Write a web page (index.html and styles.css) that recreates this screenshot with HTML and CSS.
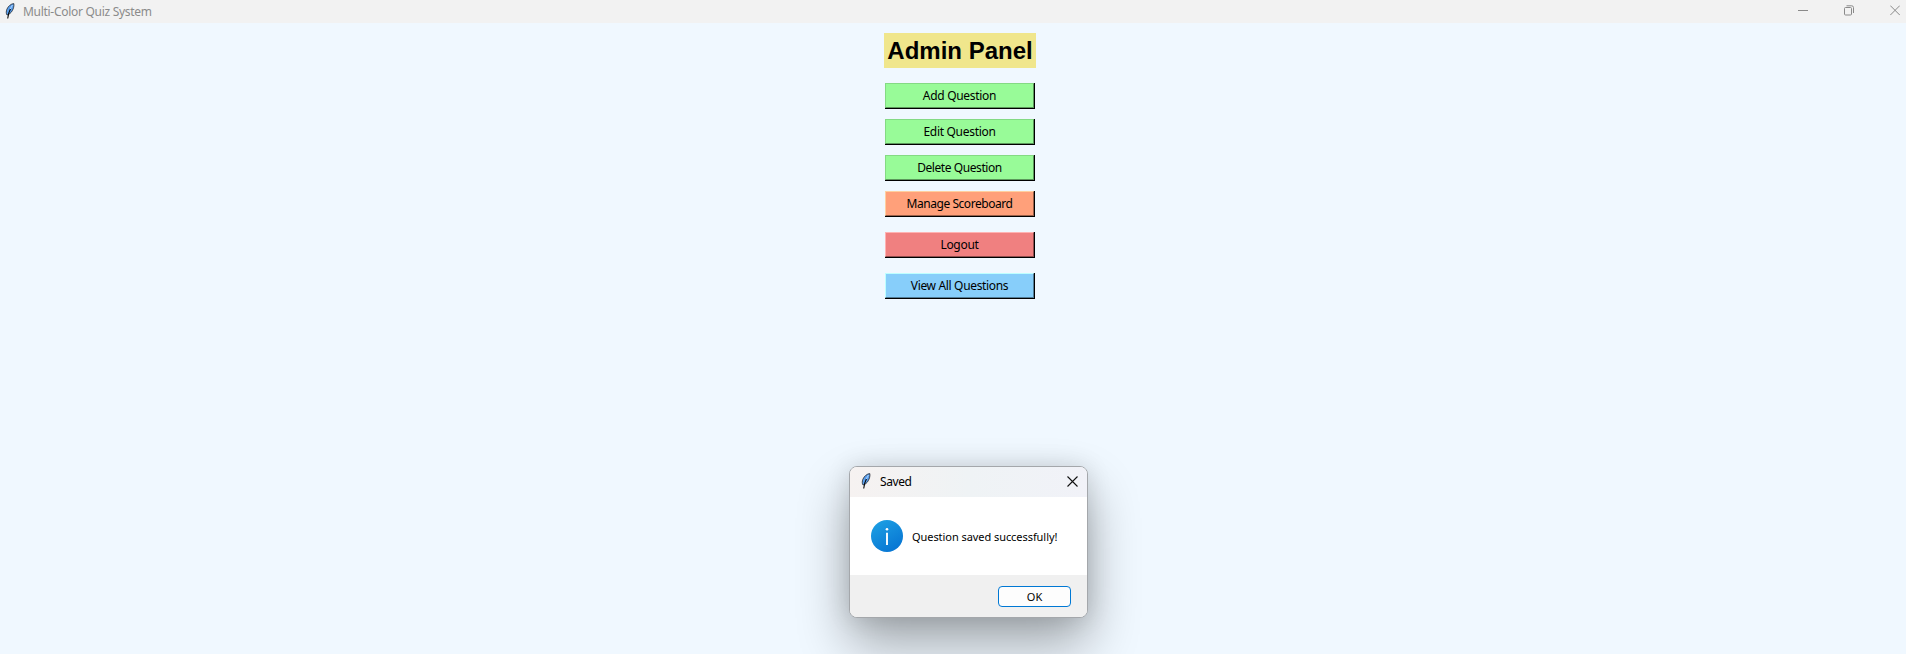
FILE: index.html
```html
<!DOCTYPE html>
<html lang="en">
<head>
<meta charset="utf-8">
<title>Multi-Color Quiz System</title>
<link rel="stylesheet" href="styles.css">
</head>
<body>
<svg width="0" height="0" class="defs" aria-hidden="true">
  <defs>
    <linearGradient id="info" x1="0.2" y1="0" x2="0.8" y2="1"><stop offset="0" stop-color="#1d9fe3"/><stop offset="1" stop-color="#0673d2"/></linearGradient>
    <symbol id="feather" viewBox="0 0 10 16">
      <path d="M8.800.6C6 .8 3.200 3.200 1.900 6.200 1 8.400 1.100 10.500 2 12c2-.5 4-2 5.200-4.200C8.600 5.400 9.200 3 8.800.6z" fill="#5a9fee" stroke="#22262c" stroke-width=".8"/>
      <path d="M5.600 5.500C4.300 8 3.100 11 2.700 15.500" fill="none" stroke="#080808" stroke-width="1.100"/>
      <path d="M7.500 2 5.200 6" stroke="#a9d0fb" stroke-width="1"/>
    </symbol>
  </defs>
</svg>
<header class="titlebar">
  <svg class="feather"><use href="#feather"/></svg>
  <span class="window-title">Multi-Color Quiz System</span>
  <div class="controls">
    <svg width="10" height="11"><path d="M0 5.500h10"/></svg>
    <svg width="10" height="11" fill="none"><rect x=".5" y="2.500" width="7" height="7.500" rx="1"/><path d="M2.500.8h5.200q1.800 0 1.800 1.800v5.400"/></svg>
    <svg width="10" height="11"><path d="M.3.600l9.500 9.500M9.800.600l-9.500 9.500"/></svg>
  </div>
</header>
<main class="panel">
  <h1>Admin Panel</h1>
  <button class="btn green add"><span>Add Question</span></button>
  <button class="btn green edit"><span>Edit Question</span></button>
  <button class="btn green delete"><span>Delete Question</span></button>
  <button class="btn salmon"><span>Manage Scoreboard</span></button>
  <button class="btn coral"><span>Logout</span></button>
  <button class="btn sky"><span>View All Questions</span></button>
</main>
<section class="dialog" role="dialog">
  <div class="dialog-title">
    <svg class="feather"><use href="#feather"/></svg>
    <span>Saved</span>
    <svg class="close" width="11" height="11"><path d="M.5.500l10 10M10.500.500l-10 10"/></svg>
  </div>
  <div class="dialog-body">
    <svg width="32" height="32"><circle cx="16" cy="16" r="16" fill="url(#info)"/><circle cx="16" cy="9.200" r="1.300" fill="#fff"/><path d="M16 12.700V25" stroke="#fff" stroke-width="1.900"/></svg>
    <span class="message">Question saved successfully!</span>
  </div>
  <div class="dialog-footer"><button class="ok">OK</button></div>
</section>
</body>
</html>
```
FILE: styles.css
```css
* { box-sizing: border-box; }
body {
  margin: 0;
  height: 654px;
  overflow: hidden;
  background: #f0f8ff;
  font: 12px/16px "Noto Sans", sans-serif;
  color: #000;
}
.defs { position: absolute; }
.titlebar {
  height: 23px;
  display: flex;
  align-items: flex-start;
  padding: 3px 6px 0 5px;
  background: #f2f2f2;
  color: #8b8b8b;
}
.feather { width: 10px; height: 16px; flex: none; }
.window-title { margin: 1px 0 0 8px; letter-spacing: -0.29px; }
.controls { margin-left: auto; padding-top: 2px; display: flex; gap: 36px; }
.controls svg { stroke: #8a8a8a; stroke-width: 1; }
.panel {
  display: flex;
  flex-direction: column;
  align-items: center;
  gap: 10px;
  padding: 10px 0 0 14px;
}
h1 {
  width: 152px;
  height: 35px;
  margin: 0 0 5px;
  background: #f0e68c;
  font: bold 24px/36px "Liberation Sans", Arial, sans-serif;
  text-align: center;
  white-space: nowrap;
}
.btn {
  width: 150px;
  height: 26px;
  padding: 0 1px 1px 0;
  border: 0;
  background: #000;
  color: #000;
  font: inherit;
  letter-spacing: -0.3px;
}
.btn span { display: block; height: 25px; line-height: 24px; border: 1px solid; }
.green span { background: #98fb98; border-color: #84da84 #5b975b #5b975b #84da84; }
.delete { letter-spacing: -0.42px; }
.salmon { letter-spacing: -0.44px; }
.salmon span { background: #ffa07a; border-color: #ffd0a0 #996049 #996049 #ffd0a0; }
.coral { margin-top: 5px; }
.coral span { background: #f08080; border-color: #ffb3b3 #904d4d #904d4d #ffb3b3; }
.sky { margin-top: 5px; letter-spacing: -0.34px; }
.sky span { background: #87cefa; border-color: #bdffff #517c96 #517c96 #bdffff; }
.dialog {
  position: absolute;
  left: 849px;
  top: 466px;
  width: 239px;
  height: 152px;
  border: 1px solid #a4a7ab;
  border-radius: 8px;
  overflow: hidden;
  background: #fff;
  box-shadow: 0 26px 52px rgba(0, 0, 0, .33), 0 0 24px rgba(0, 0, 0, .12);
}
.dialog-title {
  height: 30px;
  display: flex;
  align-items: flex-start;
  padding: 6px 9px 0 11px;
  background: linear-gradient(90deg, #f6f2f1, #eff3f5 50%, #f1f2f8);
}
.dialog-title span { margin: 1px 0 0 9px; letter-spacing: -0.4px; }
.close { margin: 3px 0 0 auto; stroke: #111; stroke-width: 1.100; }
.dialog-body { height: 78px; display: flex; align-items: flex-start; padding: 23px 0 0 21px; }
.message { margin: 9px 0 0 9px; font-size: 11px; letter-spacing: -0.06px; white-space: nowrap; }
.dialog-footer { height: 42px; display: flex; justify-content: flex-end; padding: 11px 16px 0 0; background: #f0f0f0; }
.ok {
  width: 73px;
  height: 21px;
  padding: 0;
  border: 1px solid #0078d4;
  border-radius: 4px;
  background: #fdfdfd;
  color: #000;
  font: 11px/19px "Noto Sans", sans-serif;
}
```
